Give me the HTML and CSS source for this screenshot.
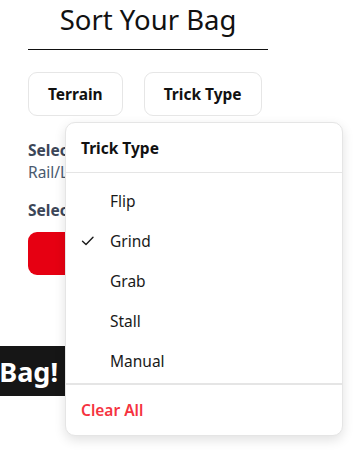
FILE: index.html
```html
<!DOCTYPE html>
<html lang="en">
<head>
<meta charset="utf-8">
<title>Sort Your Bag</title>
<link rel="stylesheet" href="styles.css">
</head>
<body>
<div class="page">
  <h1 class="title">Sort Your Bag</h1>
  <div class="filters">
    <button class="filter-btn">Terrain</button>
    <button class="filter-btn">Trick Type</button>
  </div>
  <div class="selection">
    <div class="sel-label">Selected Terrain:</div>
    <div class="sel-value">Rail/Ledge</div>
    <div class="sel-label sel-label-2">Selected Tricks:</div>
  </div>
  <button class="shake-btn">Shake</button>
  <div class="banner"><span>Pick From Your Bag!</span></div>

  <div class="dropdown">
    <div class="dd-header">Trick Type</div>
    <ul class="dd-list">
      <li class="dd-item"><span class="dd-check"></span><span>Flip</span></li>
      <li class="dd-item"><span class="dd-check"><svg width="14" height="14" viewBox="0 0 14 14"><polyline points="1.5,7.2 5,10.5 12,3.2" fill="none" stroke="#1a1a1a" stroke-width="1.4" stroke-linecap="round" stroke-linejoin="round"/></svg></span><span>Grind</span></li>
      <li class="dd-item"><span class="dd-check"></span><span>Grab</span></li>
      <li class="dd-item"><span class="dd-check"></span><span>Stall</span></li>
      <li class="dd-item"><span class="dd-check"></span><span>Manual</span></li>
    </ul>
    <div class="dd-clear">Clear All</div>
  </div>
</div>
</body>
</html>
```
FILE: styles.css
```css
* { box-sizing: border-box; }
html, body { margin: 0; padding: 0; background: #fff; }
body {
  font-family: "Noto Sans", "Open Sans", sans-serif;
  color: #111;
  width: 363px;
  height: 450px;
  overflow: hidden;
}
.page {
  position: relative;
  padding-left: 28px;
  height: 450px;
}
.title {
  margin: 0;
  width: 240px;
  padding: 2px 0 11px;
  font-size: 27.5px;
  line-height: 36px;
  font-weight: 400;
  text-align: center;
  color: #111;
  border-bottom: 1px solid #111;
}
.filters {
  display: flex;
  gap: 21px;
  margin-top: 22px;
}
.filter-btn {
  height: 44px;
  padding: 0 19px;
  border: 1px solid #e6e6e6;
  border-radius: 9px;
  background: #fff;
  font-family: inherit;
  font-size: 15.5px;
  font-weight: 700;
  color: #111;
}
.selection { margin-top: 23px; }
.sel-label {
  font-size: 15.5px;
  line-height: 22px;
  font-weight: 700;
  color: #3c4658;
}
.sel-value {
  font-size: 15.5px;
  line-height: 22px;
  color: #4a5a6e;
}
.sel-label-2 { margin-top: 16px; }
.shake-btn {
  display: block;
  margin-top: 11px;
  width: 220px;
  height: 43px;
  border: none;
  border-radius: 9px;
  background: #e60012;
  color: #fff;
  font-family: inherit;
  font-size: 16px;
  font-weight: 700;
}
.banner {
  margin-left: -28px;
  margin-top: 71px;
  width: 120px;
  height: 50px;
  background: #161616;
  color: #fff;
  display: flex;
  align-items: center;
  justify-content: flex-end;
  overflow: hidden;
  white-space: nowrap;
  padding-right: 62px;
}
.banner span {
  font-size: 27px;
  font-weight: 700;
  flex-shrink: 0;
}
.dropdown {
  position: absolute;
  left: 65px;
  top: 122px;
  width: 278px;
  background: #fff;
  border: 1px solid #e5e5e5;
  border-radius: 10px;
  box-shadow: 0 4px 12px rgba(0, 0, 0, 0.12);
}
.dd-header {
  height: 50px;
  display: flex;
  align-items: center;
  padding-left: 15px;
  font-size: 15.5px;
  font-weight: 700;
  color: #111;
  border-bottom: 1px solid #e5e5e5;
}
.dd-list {
  list-style: none;
  margin: 0;
  padding: 8px 0 2px;
  border-bottom: 2px solid #e5e5e5;
}
.dd-item {
  height: 40px;
  display: flex;
  align-items: center;
  padding-left: 15px;
  font-size: 15.5px;
  color: #1a1a1a;
}
.dd-check {
  width: 29px;
  height: 14px;
  display: flex;
  align-items: center;
}
.dd-check svg { display: block; }
.dd-clear {
  height: 50px;
  display: flex;
  align-items: center;
  padding-left: 15px;
  font-size: 15.5px;
  font-weight: 600;
  color: #f5333f;
}
```
